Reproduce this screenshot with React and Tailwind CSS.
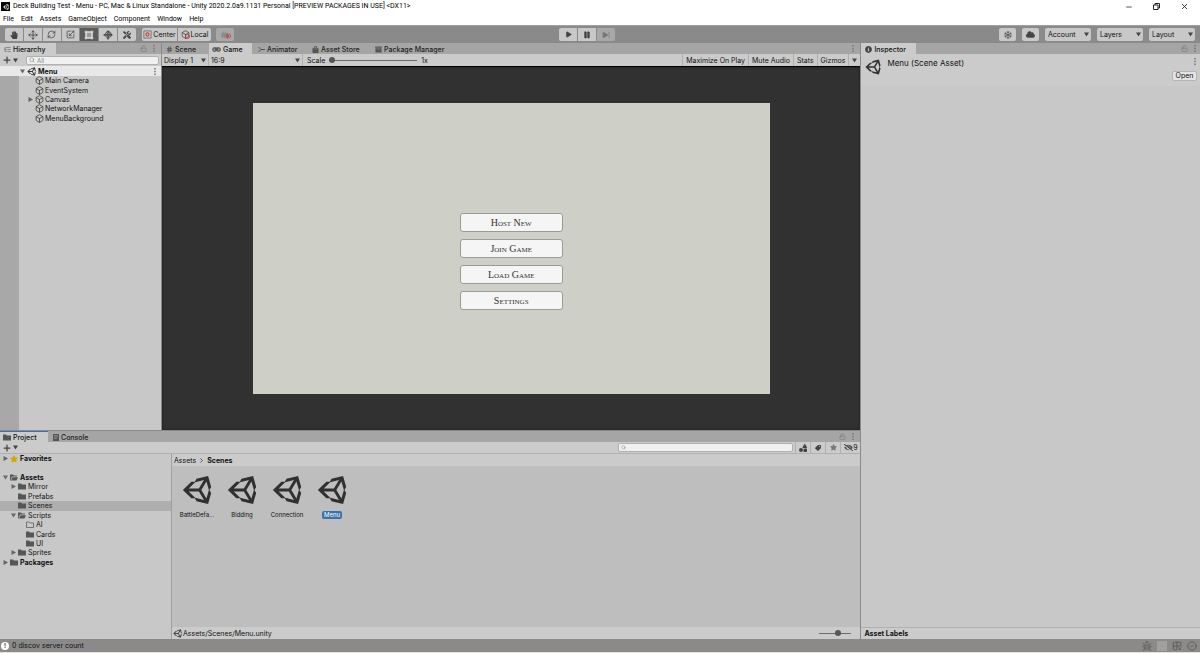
import { useState } from 'react'
import {
  Move, RefreshCw, Scaling, Play, Pause, SkipForward, LockOpen, Search, Plus, Star, Box, Minus, X,
  CircleCheck, Globe, Magnet, Hash, ListTree, Grid2x2X,
} from 'lucide-react'
import {
  FaHandPaper, FaTools, FaCloud, FaEyeSlash, FaTag, FaShapes, FaBug, FaShoppingBag, FaArchive,
  FaInfoCircle, FaRegSnowflake,
} from 'react-icons/fa'

const menus = ['File', 'Edit', 'Assets', 'GameObject', 'Component', 'Window', 'Help']

const hierarchy = [
  { name: 'Main Camera' },
  { name: 'EventSystem' },
  { name: 'Canvas', arrow: true },
  { name: 'NetworkManager' },
  { name: 'MenuBackground' },
]

const folders = [
  { name: 'Favorites', pad: 'pl-[3px]', arrow: 'right', icon: 'star', bold: true },
  null,
  { name: 'Assets', pad: 'pl-[3px]', arrow: 'down', icon: 'open', bold: true },
  { name: 'Mirror', pad: 'pl-[11px]', arrow: 'right', icon: 'folder' },
  { name: 'Prefabs', pad: 'pl-[11px]', icon: 'folder' },
  { name: 'Scenes', pad: 'pl-[11px]', icon: 'folder' },
  { name: 'Scripts', pad: 'pl-[11px]', arrow: 'down', icon: 'open' },
  { name: 'AI', pad: 'pl-[19px]', icon: 'empty' },
  { name: 'Cards', pad: 'pl-[19px]', icon: 'folder' },
  { name: 'UI', pad: 'pl-[19px]', icon: 'folder' },
  { name: 'Sprites', pad: 'pl-[11px]', arrow: 'right', icon: 'folder' },
  { name: 'Packages', pad: 'pl-[3px]', arrow: 'right', icon: 'folder', bold: true },
]

const scenes = ['BattleDefa...', 'Bidding', 'Connection', 'Menu']

const gameButtons = ['Host New', 'Join Game', 'Load Game', 'Settings']

function UnityIcon({ className }) {
  return (
    <svg viewBox="0 0 512 512" className={className} fill="currentColor" fillRule="evenodd">
      <path d="M498 206 445 15 248 66 219 116 160 116 15 256 160 396 219 396 248 446 445 497 498 306 468 256ZM224 124 375 87 288 232H115ZM224 388 115 280H288L375 425ZM417 402 330 256 417 110 459 256Z" />
    </svg>
  )
}

function FolderIcon({ type }) {
  if (type === 'star') {
    return <Star className="size-2 fill-[#d9a400] text-[#d9a400]" />
  }
  return (
    <svg viewBox="0 0 16 14" className="h-[7px] w-2 text-[#565656]">
      {type === 'folder' && <path d="M0 1h6l2 2h8v10H0z" fill="currentColor" />}
      {type === 'empty' && <path d="M1 2h5l2 2h7v9H1z" fill="none" stroke="currentColor" strokeWidth="1.5" />}
      {type === 'open' && (
        <path d="M0 1h6l2 2h6v2H4L1.500 11V13H0zM5 6.500h11L13 13H2z" fill="currentColor" />
      )}
    </svg>
  )
}

function Arrow({ dir, className = '' }) {
  return (
    <svg viewBox="0 0 10 10" className={`size-[5px] shrink-0 ${className}`} fill="currentColor">
      {dir === 'right' ? <path d="M1 0l9 5-9 5z" /> : <path d="M0 1h10L5 9z" />}
    </svg>
  )
}

function Kebab({ className = '' }) {
  return (
    <button aria-label="Options" className={`flex w-[5px] items-center justify-center text-[#777] ${className}`}>
      <svg viewBox="0 0 3 14" className="h-[7px] w-[2px]" fill="currentColor">
        <path d="M0 0h3v3H0zM0 5.500h3v3H0zM0 11h3v3H0z" />
      </svg>
    </button>
  )
}

function GameIcon() {
  return (
    <svg viewBox="0 0 18 10" className="h-[5px] w-[9px]" fill="none" stroke="currentColor" strokeWidth="2.500">
      <circle cx="5" cy="5" r="3.500" />
      <circle cx="13" cy="5" r="3.500" />
      <path d="M5 2h8M5 5h8" />
    </svg>
  )
}

function ConsoleIcon() {
  return (
    <svg viewBox="0 0 12 14" className="h-[7px] w-[6px]">
      <path d="M0 0h12v14H0z" fill="#555" />
      <path d="M2 3h8M2 6h8M2 9h5" stroke="#b5b5b5" />
    </svg>
  )
}

function TransformIcon() {
  return (
    <svg viewBox="0 0 20 20" className="size-[10px]" stroke="currentColor" strokeWidth="2">
      <path d="M4 4h12v12H4z" fill="#999" />
      <path d="M1 4h18M1 16h18M4 1v18M16 1v18" />
    </svg>
  )
}

function PivotIcon() {
  return (
    <svg viewBox="0 0 20 20" className="size-[9px]" fill="none">
      <path d="M2 2h16v16H2z" stroke="#555" strokeWidth="1.5" />
      <circle cx="10" cy="10" r="3.500" stroke="#d0393b" strokeWidth="2.500" />
    </svg>
  )
}

function LocalIcon() {
  return (
    <span className="relative">
      <Box className="size-[9px] text-[#444]" strokeWidth={2} />
      <span className="absolute right-0 bottom-0 size-[5px] rounded-full border border-[#d0393b]" />
    </span>
  )
}

function Dropdown({ label, options, className = '' }) {
  return (
    <span className={`relative flex items-center ${className}`}>
      <select aria-label={label} className="h-full w-full cursor-pointer appearance-none bg-transparent outline-none">
        {options.map((option) => (
          <option key={option}>{option}</option>
        ))}
      </select>
      <Arrow dir="down" className="pointer-events-none absolute right-[2px] text-[#444]" />
    </span>
  )
}

function Slider({ label, value, onChange, className }) {
  return (
    <input
      type="range"
      aria-label={label}
      value={value}
      onChange={(e) => onChange(Number(e.target.value))}
      className={`h-2 appearance-none bg-transparent [&::-webkit-slider-runnable-track]:h-px [&::-webkit-slider-runnable-track]:bg-[#6b6b6b] [&::-webkit-slider-thumb]:-mt-[3px] [&::-webkit-slider-thumb]:size-[6px] [&::-webkit-slider-thumb]:appearance-none [&::-webkit-slider-thumb]:rounded-full [&::-webkit-slider-thumb]:bg-[#555] ${className}`}
    />
  )
}

function Tab({ icon, active, focus, className = '', children }) {
  return (
    <button
      className={`flex items-center gap-[2px] whitespace-nowrap border-t px-1 font-medium ${
        active ? 'bg-[#cbcbcb]' : 'text-[#222]'
      } ${focus ? 'border-[#3a72b0]' : 'border-transparent'} ${className}`}
    >
      <span className="text-[#555]">{icon}</span>
      {children}
    </button>
  )
}

function TitleBar() {
  return (
    <header className="bg-white font-['Roboto',sans-serif] text-black">
      <div className="flex h-[13px] items-center gap-[3px] pl-[1px] text-[7px]">
        <span className="flex size-[9px] items-center justify-center bg-black text-white">
          <UnityIcon className="size-[6px]" />
        </span>
        <h1>Deck Building Test - Menu - PC, Mac &amp; Linux Standalone - Unity 2020.2.0a9.1131 Personal [PREVIEW PACKAGES IN USE] &lt;DX11&gt;</h1>
        <div className="ml-auto flex items-center gap-5 pr-[11px]">
          <button aria-label="Minimize"><Minus className="size-2" strokeWidth={2} /></button>
          <button aria-label="Restore">
            <svg viewBox="0 0 14 14" className="size-[7px]" fill="none" stroke="#222" strokeWidth="2">
              <path d="M1 4h9v9H1zM4 4V1h9v9h-3" />
            </svg>
          </button>
          <button aria-label="Close"><X className="size-[9px]" strokeWidth={2} /></button>
        </div>
      </div>
      <nav className="flex h-3 items-center gap-[7px] pl-[3px] text-[7px]">
        {menus.map((menu) => (
          <button key={menu}>{menu}</button>
        ))}
      </nav>
    </header>
  )
}

function Toolbar() {
  const [tool, setTool] = useState('Rect')
  const tools = [
    { name: 'Hand', icon: <FaHandPaper className="size-2" /> },
    { name: 'Move', icon: <Move className="size-[10px]" /> },
    { name: 'Rotate', icon: <RefreshCw className="size-[9px]" /> },
    { name: 'Scale', icon: <Scaling className="size-[9px]" /> },
    { name: 'Rect', icon: <TransformIcon /> },
    {
      name: 'Transform',
      icon: (
        <span className="grid place-items-center *:col-start-1 *:row-start-1">
          <Globe className="size-[7px]" strokeWidth={2.5} />
          <Move className="size-[10px]" />
        </span>
      ),
    },
    { name: 'Custom', icon: <FaTools className="size-2" /> },
  ]
  const box = 'flex items-center justify-center bg-[#c8c8c8]'

  return (
    <div className="grid h-[18px] grid-cols-[559fr_641fr] items-center border-t border-[#a0a0a0] bg-[#8a8a8a]">
      <div className="flex h-[13px] pl-[5px]">
        <div className="grid w-[131px] grid-cols-7 gap-px overflow-hidden rounded-xs">
          {tools.map((t) => (
            <button
              key={t.name}
              aria-label={t.name}
              onClick={() => setTool(t.name)}
              className={`flex items-center justify-center ${
                tool === t.name ? 'bg-[#5c5c5c] text-[#e0e0e0]' : 'bg-[#c8c8c8] text-[#444]'
              }`}
            >
              {t.icon}
            </button>
          ))}
        </div>
        <div className="ml-[6px] flex gap-px overflow-hidden rounded-xs">
          <button className={`${box} w-[35px] gap-px`}><PivotIcon />Center</button>
          <button className={`${box} w-[33px] gap-px`}><LocalIcon />Local</button>
        </div>
        <button aria-label="Snap" className="ml-[5px] flex w-[18px] items-center justify-center rounded-xs bg-[#a8a8a8] text-[#777]">
          <Hash className="size-2" />
          <Magnet className="-ml-[3px] mt-[3px] size-[6px] rotate-45 text-[#b5484a]" strokeWidth={3} />
        </button>
      </div>
      <div className="flex h-[13px] items-stretch justify-between pr-[5px]">
        <div className="grid w-14 grid-cols-3 gap-px overflow-hidden rounded-xs text-[#444]">
          <button aria-label="Play" className={box}><Play className="size-[7px] fill-current" /></button>
          <button aria-label="Pause" className={box}><Pause className="size-2 fill-current" /></button>
          <button aria-label="Step" className="flex items-center justify-center bg-[#a8a8a8] text-[#777]">
            <SkipForward className="size-2 fill-current" />
          </button>
        </div>
        <div className="flex gap-[6px]">
          <button aria-label="Preview packages" className={`${box} w-[17px] rounded-xs text-[#555]`}><FaRegSnowflake className="size-2" /></button>
          <button aria-label="Services" className={`${box} w-[17px] rounded-xs text-[#444]`}><FaCloud className="size-[9px]" /></button>
          <Dropdown label="Account" options={['Account']} className="w-[46px] rounded-xs bg-[#c8c8c8] pl-[3px]" />
          <Dropdown label="Layers" options={['Layers']} className="w-[46px] rounded-xs bg-[#c8c8c8] pl-[3px]" />
          <Dropdown label="Layout" options={['Layout']} className="w-[46px] rounded-xs bg-[#c8c8c8] pl-[3px]" />
        </div>
      </div>
    </div>
  )
}

function AddButton() {
  return (
    <button aria-label="Create" className="flex items-center gap-px text-[#444]">
      <Plus className="size-[10px]" strokeWidth={3} />
      <Arrow dir="down" />
    </button>
  )
}

function Hierarchy() {
  return (
    <section className="flex flex-col border-r border-[#8a8a8a] bg-[#c8c8c8]">
      <div className="flex h-[11px] items-stretch bg-[#a5a5a5]">
        <Tab active icon={<ListTree className="size-[7px]" />} className="w-14">Hierarchy</Tab>
        <span className="ml-auto flex items-center gap-1 pr-[5px] text-[#777]">
          <LockOpen className="size-[7px]" /><Kebab />
        </span>
      </div>
      <div className="flex h-3 items-center gap-2 bg-[#cbcbcb] px-[2px]">
        <AddButton />
        <label className="flex h-[9px] min-w-0 flex-1 items-center gap-[2px] rounded-xs border border-[#b0b0b0] bg-[#f0f0f0] px-[2px] text-[#777]">
          <Search className="size-[6px] shrink-0" />
          <input aria-label="Search hierarchy" placeholder="All" className="w-full text-[6px] leading-none outline-none placeholder:text-[#888]" />
        </label>
      </div>
      <div className="flex h-[10px] items-center gap-[2px] bg-[#e8e8e8] pl-5 font-bold">
        <Arrow dir="down" className="text-[#666]" />
        <UnityIcon className="size-[9px] text-[#333]" />
        Menu
        <Kebab className="ml-auto mr-[4px]" />
      </div>
      <div className="flex flex-1">
        <div className="w-[19px] bg-[#a8a8a8]" />
        <ul className="grid h-[47px] flex-1 grid-rows-5 pl-[9px]">
          {hierarchy.map((item) => (
            <li key={item.name} className="flex items-center gap-px">
              <span className="w-[6px] text-[#666]">{item.arrow && <Arrow dir="right" />}</span>
              <Box className="size-[9px] text-[#333]" strokeWidth={2} />
              {item.name}
            </li>
          ))}
        </ul>
      </div>
    </section>
  )
}

function GameView() {
  const [scale, setScale] = useState(0)

  return (
    <section className="flex min-w-0 flex-1 flex-col">
      <div className="flex h-[11px] items-stretch bg-[#a5a5a5]">
        <Tab icon={<Hash className="size-[7px]" strokeWidth={3} />} className="w-[47px]">Scene</Tab>
        <Tab active icon={<GameIcon />} className="w-[43px] pl-[3px]">Game</Tab>
        <Tab icon={<svg viewBox="0 0 14 14" className="size-[7px]" fill="none" stroke="currentColor" strokeWidth="2"><path d="M1 2l5 5-5 5M6 7h8" /></svg>} className="w-[54px] pl-[6px]">Animator</Tab>
        <Tab icon={<FaShoppingBag className="size-[7px]" />} className="w-16 pl-[6px]">Asset Store</Tab>
        <Tab icon={<FaArchive className="size-[7px]" />} className="pl-[5px]">Package Manager</Tab>
        <Kebab className="ml-auto mr-[5px]" />
      </div>
      <div className="flex h-3 items-stretch bg-[#cbcbcb]">
        <Dropdown label="Display" options={['Display 1', 'Display 2']} className="w-[47px] border-r border-[#b0b0b0] pl-[2px]" />
        <Dropdown label="Aspect" options={['16:9', 'Free Aspect']} className="w-[94px] border-r border-[#b0b0b0] pl-[2px]" />
        <div className="flex items-center gap-1 pl-1">
          Scale
          <Slider label="Scale" value={scale} onChange={setScale} className="w-[88px]" />
          1x
        </div>
        <div className="ml-auto flex [&>button]:border-l [&>button]:border-[#b0b0b0] [&>button]:px-[3px]">
          <button>Maximize On Play</button>
          <button>Mute Audio</button>
          <button>Stats</button>
          <button>Gizmos</button>
          <button aria-label="Gizmo options" className="text-[#444]"><Arrow dir="down" /></button>
        </div>
      </div>
      <div className="flex flex-1 items-center justify-center border-t border-black bg-[#313131] shadow-[inset_0_0_3px_#1c1c1c]">
        <div className="flex aspect-video w-[74%] flex-col items-center justify-center gap-[7px] bg-[#cecfc6] pt-[26px]">
          {gameButtons.map((label) => (
            <button
              key={label}
              className="h-[19px] w-[20%] rounded-[3px] border border-[#9a9b96] bg-[#f5f5f5] font-['Liberation_Serif',serif] text-[10px] text-[#333] [font-variant-caps:small-caps]"
            >
              {label}
            </button>
          ))}
        </div>
      </div>
    </section>
  )
}

function Project() {
  const [selected, setSelected] = useState('Menu')
  const [size, setSize] = useState(60)

  return (
    <section className="flex h-[209px] flex-col border-t border-[#8a8a8a]">
      <div className="flex h-[11px] items-stretch bg-[#a5a5a5]">
        <Tab active focus icon={<FolderIcon type="folder" />} className="w-12 pl-[3px]">Project</Tab>
        <Tab icon={<ConsoleIcon />} className="pl-[5px]">Console</Tab>
        <span className="ml-auto flex items-center gap-1 pr-[5px] text-[#777]">
          <LockOpen className="size-[7px]" /><Kebab />
        </span>
      </div>
      <div className="flex h-3 items-center border-b border-[#b0b0b0] bg-[#cbcbcb] pl-[2px]">
        <AddButton />
        <label className="ml-auto flex h-[9px] w-[175px] items-center rounded-xs border border-[#b0b0b0] bg-[#f0f0f0] px-[2px] text-[#777]">
          <Search className="size-[5px] shrink-0" />
          <input aria-label="Search project" className="w-full text-[6px] leading-none outline-none" />
        </label>
        <div className="ml-[2px] flex h-full [&>button]:flex [&>button]:w-[15px] [&>button]:items-center [&>button]:justify-center [&>button]:border-l [&>button]:border-[#b0b0b0] [&>button]:text-[#444]">
          <button aria-label="Search by type"><FaShapes className="size-2" /></button>
          <button aria-label="Search by label"><FaTag className="size-[6px] rotate-90" /></button>
          <button aria-label="Favorite"><Star className="size-[7px] fill-[#777] text-[#777]" /></button>
        </div>
        <button className="flex h-full w-5 items-center justify-center border-l border-[#b0b0b0]">
          <FaEyeSlash className="size-[9px] text-[#444]" />9
        </button>
      </div>
      <div className="flex min-h-0 flex-1">
        <nav className="w-[172px] border-r border-[#a0a0a0] bg-[#c8c8c8]">
          <ul className="grid h-[113px] grid-rows-12">
            {folders.map((f, i) =>
              f ? (
                <li
                  key={f.name}
                  className={`flex items-center gap-[2px] ${f.pad} ${f.bold ? 'font-bold' : ''} ${
                    f.name === 'Scenes' ? 'bg-[#aeaeae]' : ''
                  }`}
                >
                  <span className="w-[5px] text-[#666]">{f.arrow && <Arrow dir={f.arrow} />}</span>
                  <FolderIcon type={f.icon} />
                  {f.name}
                </li>
              ) : (
                <li key={i} />
              )
            )}
          </ul>
        </nav>
        <div className="flex flex-1 flex-col bg-[#bebebe]">
          <div className="flex h-3 items-center gap-1 bg-[#cbcbcb] pl-[2px]">
            <button>Assets</button>
            <svg viewBox="0 0 6 10" className="h-[5px] w-[3px]" fill="none" stroke="#555" strokeWidth="2"><path d="M1 1l4 4-4 4" /></svg>
            <span className="font-bold">Scenes</span>
          </div>
          <div className="flex flex-1 items-start gap-[1px] pl-[3px] pt-[9px]">
            {scenes.map((scene) => (
              <button key={scene} onClick={() => setSelected(scene)} className="flex w-11 flex-col items-center gap-[6px]">
                <UnityIcon className="size-[30px] text-[#303030]" />
                <span className={`rounded-xs px-[2px] text-[6px] leading-[8px] ${selected === scene ? 'bg-[#3a72b0] text-white' : ''}`}>
                  {scene}
                </span>
              </button>
            ))}
          </div>
          <div className="flex h-3 items-center gap-px bg-[#cbcbcb] pl-px">
            <UnityIcon className="size-[9px] text-[#444]" />
            Assets/Scenes/Menu.unity
            <Slider label="Icon size" value={size} onChange={setSize} className="ml-auto mr-[9px] w-8" />
          </div>
        </div>
      </div>
    </section>
  )
}

function Inspector() {
  return (
    <aside className="flex w-[28.3%] flex-col border-l border-[#8a8a8a] bg-[#c8c8c8]">
      <div className="flex h-[11px] items-stretch bg-[#a5a5a5]">
        <Tab active icon={<FaInfoCircle className="size-[7px] text-[#444]" />} className="w-[55px]">Inspector</Tab>
        <span className="ml-auto flex items-center gap-1 pr-[3px] text-[#777]">
          <LockOpen className="size-[7px]" /><Kebab />
        </span>
      </div>
      <div className="flex h-8 gap-[6px] bg-[#cbcbcb] pl-1">
        <UnityIcon className="mt-[5px] size-4 text-[#303030]" />
        <h2 className="pt-1 text-[8px] leading-[10px]">Menu (Scene Asset)</h2>
        <div className="ml-auto flex flex-col items-end gap-[6px] pr-[3px] pt-1">
          <Kebab />
          <button className="h-[10px] w-[25px] rounded-xs border border-[#b5b5b5] bg-[#e4e4e4] leading-[8px]">Open</button>
        </div>
      </div>
      <footer className="mt-auto flex h-3 items-center border-t border-[#b0b0b0] bg-[#cbcbcb] pl-[3px] font-bold">
        Asset Labels
      </footer>
    </aside>
  )
}

function StatusBar() {
  return (
    <footer className="flex h-[13px] items-center gap-[3px] bg-[#8a8a8a] pl-px pr-[3px]">
      <span className="flex size-2 items-center justify-center rounded-full bg-white text-[6px] font-bold leading-none text-[#333]">!</span>
      0 discov server count
      <div className="ml-auto flex gap-[5px] text-[#555]">
        <FaBug className="size-[10px] text-[#6e6e6e]" />
        <span className="size-[10px] bg-[#a0a0a0]" />
        <Grid2x2X className="size-[10px]" />
        <CircleCheck className="size-[10px]" />
      </div>
    </footer>
  )
}

export default function App() {
  return (
    <div className="flex h-screen flex-col overflow-hidden bg-[#e6e2e0] pb-px font-['Inter',sans-serif] text-[7px] leading-[9px] text-[#111]">
      <TitleBar />
      <Toolbar />
      <main className="flex min-h-0 flex-1">
        <div className="flex min-w-0 flex-1 flex-col">
          <div className="grid min-h-0 flex-1 grid-cols-[162px_1fr]">
            <Hierarchy />
            <GameView />
          </div>
          <Project />
        </div>
        <Inspector />
      </main>
      <StatusBar />
    </div>
  )
}
